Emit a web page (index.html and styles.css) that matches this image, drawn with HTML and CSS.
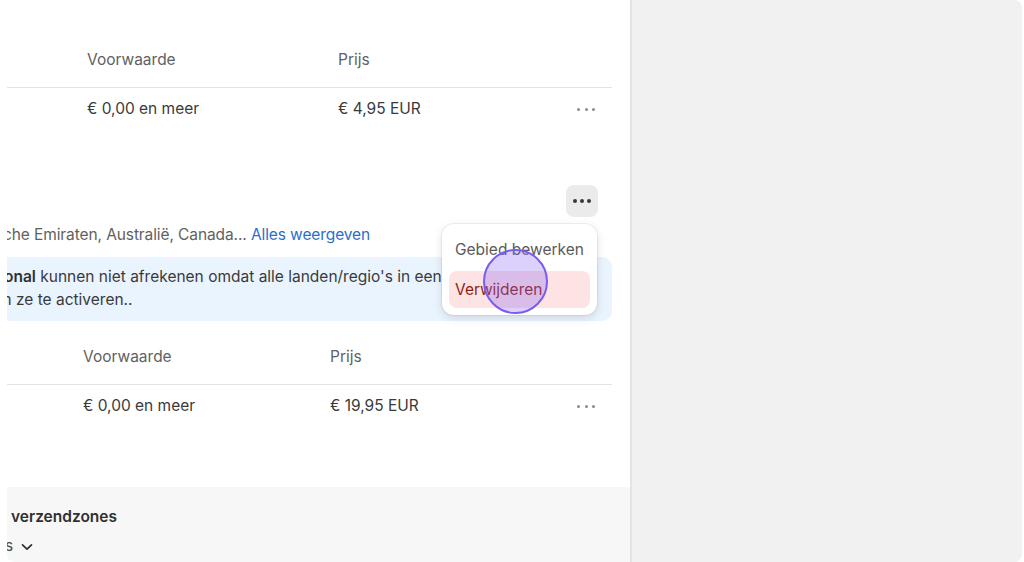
FILE: index.html
```html
<!DOCTYPE html>
<html lang="nl">
<head>
<meta charset="utf-8">
<link rel="stylesheet" href="styles.css">
</head>
<body>
<div class="frame">
  <main class="main">
    <section class="zone zone-first">
      <div class="table">
        <div class="row head t1">
          <span class="c-name"></span>
          <span class="c-cond">Voorwaarde</span>
          <span class="c-price">Prijs</span>
          <span class="c-act"></span>
        </div>
        <div class="row body t1">
          <span class="c-name"></span>
          <span class="c-cond">€ 0,00 en meer</span>
          <span class="c-price">€ 4,95 EUR</span>
          <span class="c-act"><span class="dots"><i></i><i></i><i></i></span></span>
        </div>
      </div>
    </section>

    <section class="zone zone-second">
      <div class="zone-head">
        <button class="more-btn" type="button"><span class="dots dark"><i></i><i></i><i></i></span></button>
      </div>
      <p class="line countries"><span class="pre">Verenigde Arabis</span>che Emiraten, Australië, Canada... <a class="link">Alles weergeven</a></p>
      <div class="banner">
        <p class="line ln-1"><b><span class="pre">Klanten in Internati</span>onal</b> kunnen niet afrekenen omdat alle landen/regio's in een</p>
        <p class="line ln-2"><span class="pre">inactieve markt staan. Wijzig markten o</span>m ze te activeren..</p>
      </div>
      <div class="table">
        <div class="row head t2">
          <span class="c-name"></span>
          <span class="c-cond">Voorwaarde</span>
          <span class="c-price">Prijs</span>
          <span class="c-act"></span>
        </div>
        <div class="row body t2">
          <span class="c-name"></span>
          <span class="c-cond">€ 0,00 en meer</span>
          <span class="c-price">€ 19,95 EUR</span>
          <span class="c-act"><span class="dots"><i></i><i></i><i></i></span></span>
        </div>
      </div>

      <div class="menu">
        <div class="menu-item">Gebied bewerken</div>
        <div class="menu-item danger">Verwijderen</div>
      </div>
      <div class="cursor"></div>
    </section>

    <footer class="footer">
      <div class="footer-title">verzendzones</div>
      <div class="line footer-toggle"><span class="pre">Detail</span>s<svg class="chev" width="12" height="10" viewBox="0 0 12 10"><path d="M1.5 2.8 6 7.2l4.5-4.4" fill="none" stroke="#303030" stroke-width="1.7" stroke-linecap="round" stroke-linejoin="round"/></svg></div>
    </footer>
  </main>
  <aside class="side"></aside>
</div>
</body>
</html>
```

FILE: styles.css
```css
* { box-sizing: border-box; }
html, body { margin: 0; padding: 0; background: #ffffff; }
body {
  font-family: Inter, "Noto Sans", sans-serif;
  font-size: 15.5px;
  color: #303030;
  width: 1024px;
  height: 562px;
  overflow: hidden;
}
.frame {
  margin-left: 7px;
  width: 1015px;
  height: 562px;
  display: flex;
  border-radius: 8px;
  overflow: hidden;
}
.main {
  width: 625px;
  background: #ffffff;
  display: flex;
  flex-direction: column;
  position: relative;
  overflow: hidden;
  border-right: 2px solid #e4e4e4;
}
.side {
  flex: 1;
  background: #f1f1f1;
}

.zone { padding-right: 18px; }
.zone-first { padding-top: 40px; }
.zone-second { position: relative; padding-top: 57px; flex: 1; }

.table { display: flex; flex-direction: column; }
.row { display: flex; align-items: center; line-height: 20px; }
.row.head { color: #616161; padding: 10px 0 17px; border-bottom: 1px solid #e3e3e3; }
.row.body { padding: 11px 0 9px; color: #3a3a3a; }
.t2.head { padding-top: 26px; }
.t1 .c-name { width: 80px; }
.t1 .c-cond { width: 251px; }
.t2 .c-name { width: 76px; }
.t2 .c-cond { width: 247px; }
.c-price { flex: 1; }
.c-act { width: 40px; display: flex; justify-content: center; padding-right: 12px; }

.dots { display: inline-flex; gap: 4.5px; align-items: center; }
.dots i { width: 3px; height: 3px; border-radius: 50%; background: #8a8a8a; display: block; }
.dots.dark { gap: 3px; }
.dots.dark i { width: 4px; height: 4px; background: #3a3a3a; }

.zone-head { display: flex; justify-content: flex-end; padding-right: 14px; }
.more-btn {
  width: 32px; height: 32px;
  border: 0; border-radius: 8px;
  background: #ebebeb;
  display: flex; align-items: center; justify-content: center;
  padding: 0;
}

/* lines whose beginning is scrolled out of the panel on the left */
.line { white-space: nowrap; margin: 0; }
.pre {
  display: inline-flex;
  justify-content: flex-end;
  width: 0;
  white-space: pre;
}

.countries {
  margin: 8px 0 0 -4px;
  line-height: 20px;
  color: #616161;
  letter-spacing: -0.1px;
}
.link { color: #2c6ecb; }

.banner {
  margin-top: 12px;
  background: #eaf4ff;
  border-radius: 0 10px 10px 0;
  padding: 8px 0 10px;
  line-height: 23px;
  color: #3a3a3a;
  overflow: hidden;
}
.banner b { font-weight: 600; color: #303030; }
.ln-1 { margin-left: -3px; }
.ln-2 { margin-left: -9px; }

.footer {
  height: 75px;
  background: #f7f7f7;
  padding: 20px 0 0 4px;
  line-height: 20px;
}
.footer-title { font-weight: 600; }
.footer-toggle {
  margin: 9px 0 0 -6px;
  color: #4a4a4a;
}
.chev { display: inline-block; vertical-align: -1px; margin-left: 8px; }

.menu {
  position: absolute;
  left: 435px;
  top: 96px;
  width: 155px;
  background: #ffffff;
  border-radius: 12px;
  box-shadow: 0 0 0 1px rgba(0,0,0,0.05), 0 3px 10px rgba(0,0,0,0.13);
  padding: 7px;
  display: flex;
  flex-direction: column;
  gap: 3px;
}
.menu-item {
  height: 37px;
  line-height: 37px;
  padding-left: 6px;
  border-radius: 8px;
  color: #5a5a5a;
  white-space: nowrap;
}
.menu-item.danger { background: #fde3e4; color: #8e1f0b; }

.cursor {
  position: absolute;
  left: 476px;
  top: 121px;
  width: 65px;
  height: 65px;
  border-radius: 50%;
  background: rgba(140, 100, 245, 0.30);
  border: 2.5px solid #7a5cf0;
}
```
